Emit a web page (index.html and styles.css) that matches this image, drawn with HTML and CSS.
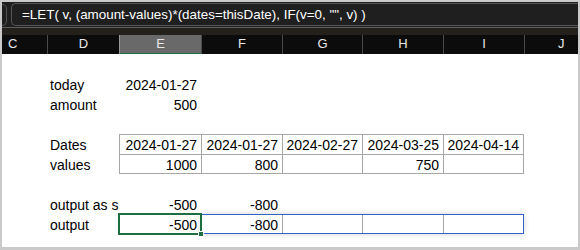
FILE: index.html
```html
<!DOCTYPE html>
<html>
<head>
<meta charset="utf-8">
<link rel="stylesheet" href="styles.css">
</head>
<body>
<div class="frame">
  <div class="formula-bar">
    <div class="namebox"></div>
    <div class="fx">=LET( v, (amount-values)*(dates=thisDate), IF(v=0, "", v) )</div>
  </div>
  <div class="band"></div>
  <div class="headers">
    <div class="hd hd-c">C</div>
    <div class="hd">D</div>
    <div class="hd active">E</div>
    <div class="hd">F</div>
    <div class="hd">G</div>
    <div class="hd">H</div>
    <div class="hd">I</div>
    <div class="hd hd-j">J</div>
  </div>
  <div class="sheet">
    <div class="row"></div>
    <div class="row">
      <div class="c"></div><div class="c">today</div><div class="c num">2024-01-27</div>
    </div>
    <div class="row">
      <div class="c"></div><div class="c">amount</div><div class="c num">500</div>
    </div>
    <div class="row"></div>
    <div class="row">
      <div class="c"></div><div class="c">Dates</div>
      <div class="c num t">2024-01-27</div>
      <div class="c num t">2024-01-27</div>
      <div class="c num t">2024-02-27</div>
      <div class="c num t">2024-03-25</div>
      <div class="c num t t-end">2024-04-14</div>
    </div>
    <div class="row">
      <div class="c"></div><div class="c">values</div>
      <div class="c num t t-bot">1000</div>
      <div class="c num t t-bot">800</div>
      <div class="c num t t-bot"></div>
      <div class="c num t t-bot">750</div>
      <div class="c num t t-bot t-end"></div>
    </div>
    <div class="row"></div>
    <div class="row">
      <div class="c"></div><div class="c">output as s</div>
      <div class="c num">-500</div>
      <div class="c num">-800</div>
    </div>
    <div class="row">
      <div class="c"></div><div class="c">output</div>
      <div class="c num active-cell">-500<span class="sel"><span class="fill"></span></span></div>
      <div class="range">
        <div class="c num">-800</div>
        <div class="c num g"></div>
        <div class="c num g"></div>
        <div class="c num g"></div>
      </div>
    </div>
    <div class="row"></div>
  </div>
</div>
</body>
</html>
```

FILE: styles.css
```css
* { box-sizing: border-box; }
html, body { margin: 0; padding: 0; }
body { width: 580px; height: 250px; overflow: hidden; font-family: "Liberation Sans", Arial, sans-serif; }

.frame {
  width: 580px;
  height: 250px;
  background: #cacaca;
  padding: 2px 2px 3px 2px;
  display: flex;
  flex-direction: column;
  overflow: hidden;
}

.formula-bar {
  height: 26px;
  flex: none;
  background: #1f1f1f;
  border-bottom: 1px solid #5d5d5d;
  display: flex;
  align-items: center;
}
.namebox {
  width: 5px;
  height: 22px;
  border: 1px solid #555;
  border-left: none;
  border-radius: 0 5px 5px 0;
}
.fx {
  margin-left: 4px;
  flex: 1;
  height: 23px;
  border: 1px solid #555;
  border-right: none;
  border-radius: 5px 0 0 5px;
  padding-left: 10px;
  color: #ffffff;
  font-size: 13.4px;
  line-height: 21px;
  white-space: nowrap;
  overflow: hidden;
}

.band { height: 7px; flex: none; background: #24201c; }

.headers, .row {
  display: grid;
  grid-template-columns: 45px 72px 82px 81px 80px 81px 81px 1fr;
}
.headers {
  height: 19px;
  flex: none;
  background: #0c0c0c;
}
.hd {
  color: #e8e8e8;
  font-size: 13px;
  line-height: 18px;
  text-align: center;
  border-left: 1px solid #4a4a4a;
}
.hd-c { border-left: none; text-align: left; padding-left: 6px; }
.hd-j { text-align: left; padding-left: 33px; }
.hd.active {
  background: #696969;
  border-left: 1px solid #9a9a9a;
  border-right: 1px solid #9a9a9a;
  border-bottom: 2px solid #1e7145;
  margin-right: -1px;
}

.sheet { flex: 1; background: #ffffff; overflow: hidden; }
.row { height: 20px; }
.c {
  font-size: 14px;
  line-height: 16px;
  padding: 3px 4px 0 3px;
  color: #000;
  white-space: nowrap;
  overflow: hidden;
}
.num { text-align: right; }
.t { border-left: 1px solid #a6a6a6; border-top: 1px solid #a6a6a6; padding-top: 2px; }
.t-end { border-right: 1px solid #a6a6a6; }
.t-bot { border-bottom: 1px solid #a6a6a6; }

.active-cell { position: relative; overflow: visible; }
.sel {
  position: absolute;
  left: -1px; right: -1px; top: -1px; bottom: -1px;
  border: 2px solid #1e6e42;
  z-index: 3;
}
.fill {
  position: absolute;
  right: -4px;
  bottom: -4px;
  width: 6px;
  height: 6px;
  background: #1e6e42;
  border: 1px solid #ffffff;
}

.range {
  grid-column: 4 / 8;
  display: grid;
  grid-template-columns: 81px 80px 81px 81px;
  outline: 1px solid #2f63c8;
  outline-offset: -1px;
  box-shadow: 0 0 6px rgba(0, 0, 0, 0.18);
  z-index: 2;
}
.g { border-left: 1px solid #a6a6a6; }
```
